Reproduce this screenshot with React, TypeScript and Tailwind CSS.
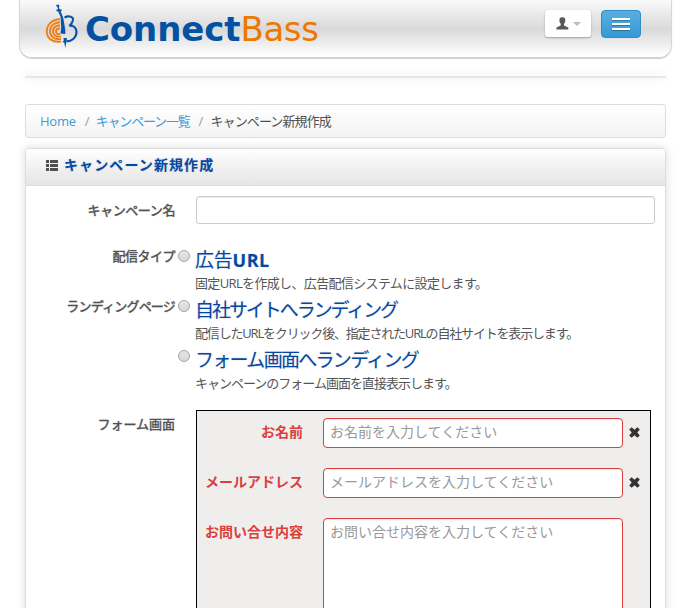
import type { ReactNode } from 'react';

const softShadow = "[text-shadow:0_0_2px_rgba(0,0,0,0.18)]";

function BassLogo() {
  return (
    <svg width="34" height="45" viewBox="0 0 34 45" fill="none" className="shrink-0">
      <g stroke="#ee7d16" strokeWidth="1.9">
        <path d="M15 15.300C7 15.500 1.800 20.500 1.800 27.500C1.800 34.500 8 38.800 16 37.600" />
        <path d="M15 18.300C9 18.500 5 22 5 27.500C5 32.500 9.500 36 16 35" />
        <path d="M15 21.200C11 21.500 8 23.800 8 27.500C8 31 11 33.300 16 32.500" />
        <path d="M15 24.200C12.500 24.500 11 25.500 11 27.500C11 29.500 12.500 30.500 15 30" />
      </g>
      <path d="M11.500 .8L14 .8L14.500 2.200L13.800 3.500L14.600 5.200L16.800 5.500L16.500 7L15.600 7.200L18.300 14L20.300 26V30L15.500 29.500L16.200 24L15.600 13L13.200 7.500L11.300 7L11.500 5.700L13 5.300L12.400 3L11.200 2Z" fill="#0754a5" />
      <path d="M18.500 34H22L21.300 38.500L20.300 44L19.200 38.500L17.200 38L18.800 36.800Z" fill="#0754a5" />
      <path d="M19.500 13.600C23 11.500 27.500 12.300 28 15C28.400 18 26 19 25.500 21.500C28 21.500 31.300 23.500 31.500 27.800C31.700 33 27.500 37.200 21.500 37.300" stroke="#0754a5" strokeWidth="2.1" />
      <path d="M23.500 20.500H27.500V23L24.500 22.500Z" fill="#0754a5" />
    </svg>
  );
}

function UserIcon() {
  return (
    <svg width="13" height="13" viewBox="0 0 13 13" className="text-[#595959]">
      <path fill="currentColor" d="M3.400 2.400C3.700.7 5 .3 6.300.3S9 .7 9.300 2.400C9.400 4.200 9 5.800 8 6.700V8.500L12.300 10.500V12.500H.4V10.500L4.700 8.500V6.700C3.700 5.800 3.300 4.200 3.400 2.400Z" />
    </svg>
  );
}

function ListIcon() {
  return (
    <svg width="12" height="11" viewBox="0 0 12 11" fill="#505050" className="-mt-[3px]">
      <path d="M0 0H3V3H0ZM4 0H12V3H4ZM0 4H3V7H0ZM4 4H12V7H4ZM0 8H3V11H0ZM4 8H12V11H4Z" />
    </svg>
  );
}

function RemoveIcon() {
  return (
    <svg width="11" height="11" viewBox="0 0 11 11" className="shrink-0">
      <path fill="#333" d="M2.600 .3L5.500 2.800L8.400 .3L10.800 2.600L8.300 5.500L10.800 8.400L8.400 10.700L5.500 8.200L2.600 10.700L.2 8.400L2.700 5.500L.2 2.600Z" />
    </svg>
  );
}

function Label({ children, tracking }: { children?: ReactNode; tracking?: string }) {
  return (
    <div className="flex w-[150px] shrink-0 justify-end pr-px text-[13px] leading-5 font-normal whitespace-nowrap text-[#505050] [-webkit-text-stroke:0.35px_#505050]">
      <span className={`${tracking ?? ''} ${softShadow}`}>{children}</span>
    </div>
  );
}

interface ChoiceProps {
  label?: string;
  labelTracking?: string;
  title: ReactNode;
  titleTracking: string;
  text: string;
  textTracking: string;
}

function Choice({ label, labelTracking, title, titleTracking, text, textTracking }: ChoiceProps) {
  return (
    <div className="flex h-[50px]">
      <Label tracking={labelTracking}>{label}</Label>
      <span className="mt-1 ml-[2px] size-3 shrink-0 rounded-full border border-[#a6a6a6] bg-gradient-to-b from-[#e6e6e6] to-[#d8d8d8]" />
      <div className="ml-[5px] whitespace-nowrap">
        <div className={`h-[27px] leading-[28px] font-normal text-[#0448a4] ${titleTracking} ${softShadow}`}>{title}</div>
        <div className={`text-[13px] leading-5 text-[#555] ${textTracking}`}>{text}</div>
      </div>
    </div>
  );
}

function Field({ label, placeholder, tall }: { label: string; placeholder: string; tall?: boolean }) {
  return (
    <div className="flex">
      <div className="w-[106px] shrink-0 pt-[3px] text-right text-[14px] leading-5 font-bold whitespace-nowrap text-[#d9403e]">{label}</div>
      <div className={`ml-5 w-[300px] shrink-0 rounded border border-[#d9403e] bg-white px-[6px] pt-[2px] text-[14px] leading-5 text-[#999] shadow-[inset_0_1px_1px_rgba(0,0,0,0.075)] ${tall ? 'h-[120px]' : 'h-[30px]'}`}>
        {placeholder}
      </div>
      {!tall && <div className="mt-[9px] ml-[6px]"><RemoveIcon /></div>}
    </div>
  );
}

export default function App() {
  return (
    <div className="h-[608px] w-[691px] overflow-hidden bg-white font-['Open_Sans','Noto_Sans_CJK_JP',sans-serif]">
      <header className="ml-5 flex h-[57px] w-[651px] justify-between rounded-b-[12px] bg-[linear-gradient(#fafafa_0px,#d9d9d9_29px,#fff_56px)] shadow-[0_1px_1px_1px_rgba(0,0,0,0.18)]">
        <div className="flex pt-1 pl-[25px]">
          <BassLogo />
          <div className="ml-[6px] font-['DejaVu_Sans'] text-[34px] leading-[50px] whitespace-nowrap text-[#0351a3]">
            <span className="font-bold tracking-[-0.1px]">Connect</span>
            <span className="tracking-[-0.4px] text-[#ee7700]">Bass</span>
          </div>
        </div>
        <div className="flex gap-[10px] pt-[10px] pr-[30px]">
          <button className="flex h-[27px] w-[46px] items-center justify-center gap-1 rounded-[3px] bg-white shadow-[0_1px_2px_rgba(0,0,0,0.3)]">
            <UserIcon />
            <span className="border-x-4 border-t-4 border-x-transparent border-t-[#bbb]" />
          </button>
          <button className="flex h-7 w-10 flex-col items-center justify-center gap-[3px] rounded border border-[#348bc6] bg-gradient-to-b from-[#5aaee0] to-[#3499d8]">
            <span className="h-[2px] w-[18px] bg-white shadow-[0_1px_1px_rgba(0,0,0,0.3)]" />
            <span className="h-[2px] w-[18px] bg-white shadow-[0_1px_1px_rgba(0,0,0,0.3)]" />
            <span className="h-[2px] w-[18px] bg-white shadow-[0_1px_1px_rgba(0,0,0,0.3)]" />
          </button>
        </div>
      </header>
      <div className="mt-[19px] ml-[25px] h-[2px] w-[641px] bg-[#e7e7e7] shadow-[0_0_10px_rgba(0,0,0,0.14)]" />

      <nav className="mt-[26px] ml-[25px] flex h-[34px] w-[641px] items-center rounded-[3px] border border-[#ddd] bg-gradient-to-b from-white to-[#f4f4f4] pt-px pl-[14px] text-[13px] whitespace-nowrap text-[#505050]">
        <a className="tracking-[-0.25px] text-[#3b9bd8]">Home</a>
        <span className="ml-[9px] w-[11px] text-[#999]">/</span>
        <a className="tracking-[-1.2px] text-[#3b9bd8]">キャンペーン一覧</a>
        <span className="ml-[9px] w-[12px] text-[#999]">/</span>
        <span className="tracking-[-0.9px]">キャンペーン新規作成</span>
      </nav>

      <main className="mt-[10px] ml-[25px] h-[480px] w-[641px] rounded-t-[3px] border border-[#ddd] shadow-[0_0_10px_rgba(0,0,0,0.14)]">
        <div className="flex h-[37px] items-center gap-[6px] rounded-t-[2px] border-b border-[#ddd] bg-gradient-to-b from-white to-[#e5e5e5] pl-5">
          <ListIcon />
          <h1 className={`pb-[4px] text-[14px] leading-5 font-bold tracking-[1.1px] whitespace-nowrap text-[#0448a4] ${softShadow}`}>キャンペーン新規作成</h1>
        </div>
        <div className="flex h-[60px] pt-[10px]">
          <div className="pt-1"><Label tracking="tracking-[-0.4px]">キャンペーン名</Label></div>
          <div className="ml-5 h-7 w-[459px] rounded-[3px] border border-[#ccc] bg-white shadow-[inset_0_1px_1px_rgba(0,0,0,0.075)]" />
        </div>
        <Choice label="配信タイプ" labelTracking="tracking-[-0.5px]" title={<>広告<b className="text-[18px] tracking-[0.5px]">URL</b></>} titleTracking="text-[19px] tracking-[-0.2px]" text="固定URLを作成し、広告配信システムに設定します。" textTracking="tracking-[-0.65px]" />
        <Choice label="ランディングページ" labelTracking="tracking-[-0.8px]" title="自社サイトへランディング" titleTracking="text-[19px] tracking-[-2.05px]" text="配信したURLをクリック後、指定されたURLの自社サイトを表示します。" textTracking="tracking-[-1.18px]" />
        <Choice title="フォーム画面へランディング" titleTracking="text-[19px] tracking-[-1.7px]" text="キャンペーンのフォーム画面を直接表示します。" textTracking="tracking-[-1px]" />
        <div className="flex pt-[18px]">
          <Label>フォーム画面</Label>
          <div className="-mt-1 ml-5 flex h-[250px] w-[455px] shrink-0 flex-col gap-5 border border-black bg-[#efeeec] pt-[7px] font-['Noto_Sans_CJK_JP',sans-serif]">
            <Field label="お名前" placeholder="お名前を入力してください" />
            <Field label="メールアドレス" placeholder="メールアドレスを入力してください" />
            <Field label="お問い合せ内容" placeholder="お問い合せ内容を入力してください" tall />
          </div>
        </div>
      </main>
    </div>
  );
}
